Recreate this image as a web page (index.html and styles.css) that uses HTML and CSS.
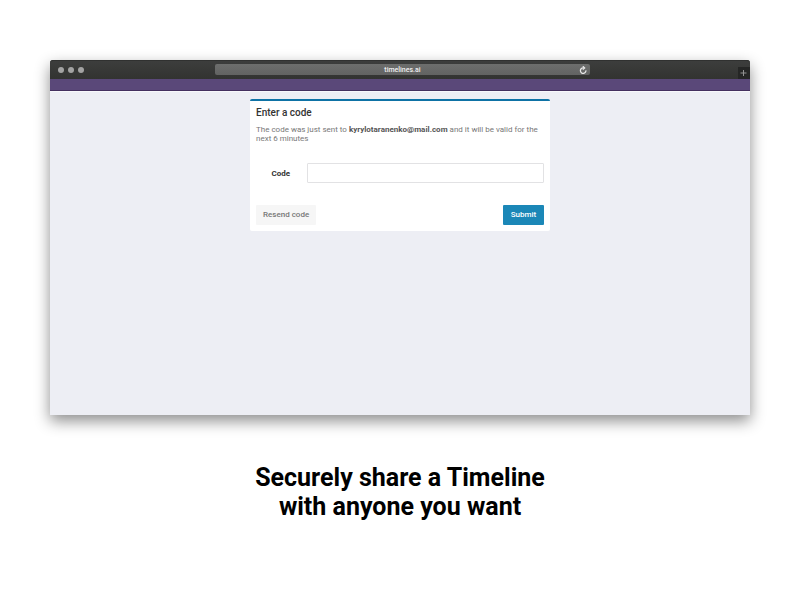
FILE: index.html
```html
<!DOCTYPE html>
<html lang="en">
<head>
<meta charset="utf-8">
<meta name="viewport" content="width=device-width, initial-scale=1">
<title>Securely share a Timeline</title>
<link rel="stylesheet" href="styles.css">
</head>
<body>
<main class="page">
  <section class="browser">
    <header class="toolbar">
      <div class="lights"><span class="light"></span><span class="light"></span><span class="light"></span></div>
      <div class="address">
        <span>timelines.ai</span>
        <button class="reload" type="button" aria-label="Reload">
          <svg viewBox="0 0 14 14" fill="none" stroke="currentColor" stroke-width="2.2"><path d="M12 7.6A4.8 4.8 0 1 1 7.2 3.4h2"/><path d="M6.7.4 9.9 3.4 6.7 6.4"/></svg>
        </button>
      </div>
      <button class="new-tab" type="button" aria-label="New tab">
        <svg viewBox="0 0 12 12" fill="none" stroke="currentColor"><path d="M5.5 3v6M2.5 6h6"/></svg>
      </button>
    </header>
    <div class="site-bar"></div>
    <div class="site">
      <form class="card">
        <h2 class="card-title">Enter a code</h2>
        <p class="message">The code was just sent to <strong>kyrylotaranenko@mail.com</strong> and it will be valid for the next 6 minutes</p>
        <div class="field">
          <label for="code">Code</label>
          <input id="code" type="text">
        </div>
        <div class="actions">
          <button class="button" type="button">Resend code</button>
          <button class="button primary" type="submit">Submit</button>
        </div>
      </form>
    </div>
  </section>
  <h1 class="headline">Securely share a Timeline<br>with anyone you want</h1>
</main>
</body>
</html>
```
FILE: styles.css
```css
* { box-sizing: border-box; }
body {
  margin: 0;
  background: #fff;
  color: #000;
  font-family: Roboto, "Liberation Sans", sans-serif;
}
h1, h2, p { margin: 0; }
button { border: 0; padding: 0; font: inherit; }
.page { padding: 60px 50px; }
.browser {
  display: flex;
  flex-direction: column;
  min-height: 355px;
  border-radius: 3px 3px 0 0;
  background: #edeef4;
  box-shadow: 0 6px 15px rgba(0, 0, 0, .45);
}
.toolbar {
  display: grid;
  grid-template-columns: 1fr 375px 1fr;
  align-items: center;
  height: 19px;
  padding-left: 5px;
  border-radius: 3px 3px 0 0;
  background: linear-gradient(#3d3e3d, #323331);
  box-shadow: inset 0 1px #303130;
}
.lights { display: flex; gap: 4px; padding-left: 3px; }
.light {
  width: 6px;
  height: 6px;
  border-radius: 50%;
  background: #a3a3a3;
}
.address {
  display: flex;
  align-items: center;
  justify-content: center;
  position: relative;
  height: 11px;
  border-radius: 2px;
  background: linear-gradient(#6d6e6d, #626362);
  color: #f0f0f0;
  font-size: 7px;
  line-height: 12px;
  font-weight: 500;
}
.reload {
  position: absolute;
  right: 3px;
  display: flex;
  background: none;
  color: #e8e8e8;
}
.reload svg { width: 8px; height: 8px; }
.new-tab {
  display: flex;
  align-self: end;
  justify-self: end;
  background: #252625;
  color: #929292;
}
.new-tab svg { width: 12px; height: 12px; }
.site-bar {
  height: 12px;
  border-bottom: 1px solid #44305f;
  background: #5a4879;
}
.site {
  flex: 1;
  padding: 7px;
  border-top: 1px solid #f8f8fb;
}
.card {
  max-width: 300px;
  margin: 0 auto;
  padding: 6px;
  border-top: 2px solid #0e72a5;
  border-radius: 2px;
  background: #fff;
}
.card-title {
  color: #333;
  font-size: 10px;
  line-height: 12px;
  font-weight: 500;
}
.message {
  margin-top: 6px;
  color: #777;
  font-size: 8px;
  line-height: 9px;
}
.message strong { color: #555; }
.field {
  display: grid;
  grid-template-columns: 34px 1fr;
  align-items: center;
  gap: 17px;
  margin-top: 20px;
}
.field label {
  color: #333;
  font-size: 8px;
  font-weight: 700;
  text-align: right;
}
.field input {
  width: 100%;
  min-width: 0;
  height: 20px;
  padding: 2px 6px;
  border: 1px solid #e2e2e4;
  border-radius: 1px;
  font: 8px Roboto, sans-serif;
}
.actions {
  display: flex;
  justify-content: space-between;
  margin-top: 22px;
}
.button {
  min-width: 41px;
  height: 20px;
  padding: 0 7px;
  border-radius: 1px;
  background: #f6f6f6;
  color: #777;
  font-size: 8px;
  line-height: 20px;
  font-weight: 500;
}
.primary { background: #1b87b7; color: #fff; }
.headline {
  margin-top: 48px;
  font-size: 25px;
  line-height: 29px;
  font-weight: 700;
  text-align: center;
}
```
